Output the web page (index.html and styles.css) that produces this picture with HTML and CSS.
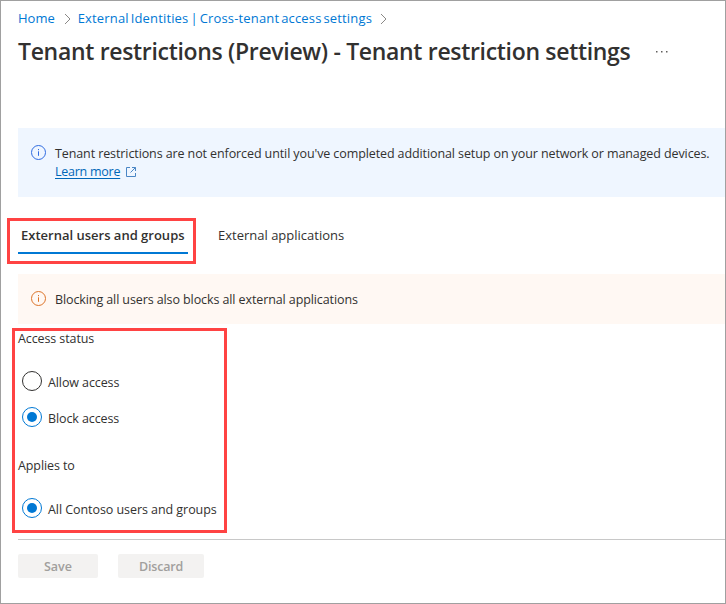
FILE: index.html
```html
<!DOCTYPE html>
<html lang="en">
<head>
<meta charset="utf-8">
<title>Tenant restriction settings</title>
<link rel="stylesheet" href="styles.css">
</head>
<body>
<main class="page">
  <nav class="breadcrumb">
    <a href="#">Home</a>
    <svg class="chevron" viewBox="0 0 8 12"><path d="M1 1l5 5-5 5"/></svg>
    <a class="parent" href="#">External Identities | Cross-tenant access settings</a>
    <svg class="chevron" viewBox="0 0 8 12"><path d="M1 1l5 5-5 5"/></svg>
  </nav>
  <header class="heading">
    <h1>Tenant restrictions (Preview) - Tenant restriction settings</h1>
    <svg class="more" viewBox="0 0 12 2"><path d="M0 0h1.5v1.5H0zM5 0h1.5v1.5H5zM10 0h1.5v1.5H10z"/></svg>
  </header>

  <section class="notice notice-info">
    <svg class="info-icon" viewBox="0 0 15 15"><circle cx="7.5" cy="7.5" r="7"/><path d="M7.5 6.3v4.5M7.5 4v1.2"/></svg>
    <div>
      <p class="enforcement">Tenant restrictions are not enforced until you've completed additional setup on your network or managed devices.</p>
      <p class="learn"><a href="#">Learn more</a><svg class="external" viewBox="0 0 10 10"><path d="M4 .5H.5v9h9V6M6 .5h3.500v3.500M9.500.5l-5 5"/></svg></p>
    </div>
  </section>

  <div class="tabs">
    <div class="tab-highlight"><div class="tab tab-active">External users and groups</div></div>
    <div class="tab">External applications</div>
  </div>

  <section class="notice notice-warning">
    <svg class="info-icon" viewBox="0 0 15 15"><circle cx="7.5" cy="7.5" r="7"/><path d="M7.5 6.3v4.5M7.5 4v1.2"/></svg>
    <p>Blocking all users also blocks all external applications</p>
  </section>

  <section class="access">
    <h2>Access status</h2>
    <label class="option"><span class="radio"></span>Allow access</label>
    <label class="option"><span class="radio checked"></span>Block access</label>
    <h2 class="applies">Applies to</h2>
    <label class="option all-users"><span class="radio checked"></span>All Contoso users and groups</label>
  </section>

  <footer class="actions">
    <button class="save" disabled>Save</button>
    <button class="discard" disabled>Discard</button>
  </footer>
</main>
</body>
</html>
```

FILE: styles.css
```css
* { box-sizing: border-box; }

body {
  margin: 0;
  background: #fff;
  color: #323130;
  font: 12.5px/18px "Open Sans", "Noto Sans", sans-serif;
  letter-spacing: -0.1px;
}

h1, h2, p { margin: 0; }
p, h1, h2, a, label, .tab { white-space: nowrap; }
svg { flex: none; fill: none; }

.page {
  width: 726px;
  height: 604px;
  padding-top: 8px;
  border: 1px solid #a0a0a0;
  overflow: hidden;
}

.breadcrumb {
  display: flex;
  align-items: center;
  height: 18px;
  padding-left: 17px;
  font-size: 13px;
  letter-spacing: 0;
}
.breadcrumb a { color: #0078d4; text-decoration: none; }
.breadcrumb .parent { width: 294px; word-spacing: -1.5px; letter-spacing: 0.15px; }
.chevron {
  width: 8px;
  height: 12px;
  margin: 2px 6px 0 9px;
  stroke: #8a8886;
}
.breadcrumb .chevron:last-child { margin-left: 8px; }

.heading {
  display: flex;
  align-items: center;
  height: 30px;
  margin-top: 9px;
  padding-left: 17px;
}
h1 {
  width: 638px;
  font-size: 23px;
  font-weight: 600;
  line-height: 30px;
  letter-spacing: -0.32px;
}
.more { width: 12px; height: 2px; margin-top: 2px; fill: #605e5c; }

.notice {
  display: flex;
  margin-left: 17px;
  padding-left: 13px;
}
.notice-info { height: 69px; margin-top: 62px; padding-top: 17px; background: #eff6ff; }
.notice-warning { height: 50px; margin-top: 10px; padding-top: 17px; background: #fff8f3; }
.info-icon {
  width: 15px;
  height: 15px;
  margin-right: 9px;
  stroke: #2f6be0;
}
.notice-warning .info-icon { stroke: #dc7429; }
.learn { display: flex; align-items: center; }
.learn a { color: #0067b8; text-underline-offset: 2px; letter-spacing: -0.25px; }
.external { width: 10px; height: 10px; margin-left: 6px; stroke: #4a86c5; }

.tabs {
  display: flex;
  gap: 22px;
  margin: 21px 0 0 6px;
  font-size: 13px;
  letter-spacing: 0;
}
.tab { padding-top: 8px; }
.tab-highlight {
  width: 189px;
  height: 46px;
  padding: 0 5px 0 8px;
  border: 3px solid #ff4343;
}
.tab-active {
  width: 170px;
  height: 33px;
  padding: 5px 3px 0;
  border-bottom: 2px solid #0078d4;
  font-weight: 600;
}

.access {
  width: 215px;
  height: 205px;
  margin: 4px 0 0 11px;
  padding-left: 3px;
  border: 3px solid #ff4343;
}
h2 { height: 18px; margin-top: -1px; font-size: 12.5px; font-weight: 400; line-height: 18px; }
.option { display: flex; align-items: center; height: 20px; margin: 25px 0 0 4px; }
.option + .option { margin-top: 16px; }
.all-users { letter-spacing: -0.06px; }
.radio {
  display: grid;
  place-items: center;
  width: 20px;
  height: 20px;
  margin: -4px 6px 0 0;
  border: 1px solid #323130;
  border-radius: 50%;
}
.radio.checked { border-color: #0078d4; }
.radio.checked::after { content: ""; width: 10px; height: 10px; border-radius: 50%; background: #0078d4; }
.applies { margin-top: 28px; }

.actions {
  display: flex;
  gap: 20px;
  margin: 6px 0 0 17px;
  padding-top: 14px;
  border-top: 1px solid #c8c8c8;
}
button {
  height: 24px;
  padding: 1px 0 0;
  border: 0;
  border-radius: 2px;
  background: #f3f2f1;
  color: #a19f9d;
  font: 600 12.5px/24px "Open Sans", "Noto Sans", sans-serif;
}
.save { width: 80px; }
.discard { width: 86px; letter-spacing: -0.2px; }
```
